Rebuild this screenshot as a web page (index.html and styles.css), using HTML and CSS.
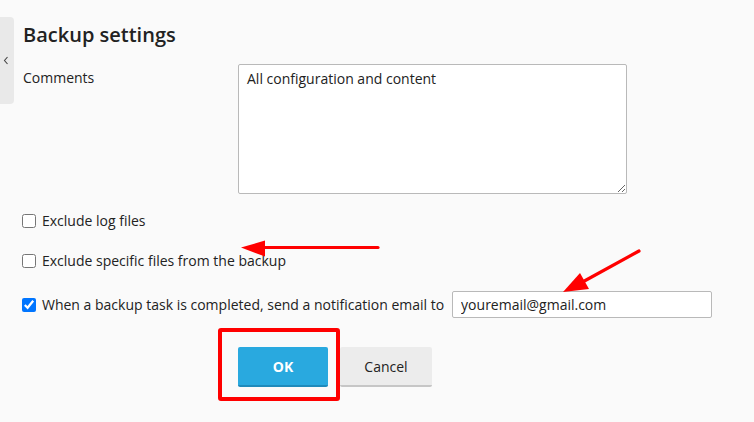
FILE: index.html
```html
<!DOCTYPE html>
<html lang="en">
<head>
<meta charset="utf-8">
<title>Backup settings</title>
<link rel="stylesheet" href="styles.css">
</head>
<body>
<div class="page">
  <div class="side-tab">
    <svg class="chevron" width="6" height="9" viewBox="0 0 6 9"><path d="M4.5 1 L1.5 4.5 L4.5 8" fill="none" stroke="#444" stroke-width="1.1"/></svg>
  </div>
  <main class="content">
    <h1 class="title">Backup settings</h1>
    <div class="field-row">
      <label class="field-label" for="comments">Comments</label>
      <textarea id="comments" class="comments">All configuration and content</textarea>
    </div>
    <div class="check-row first">
      <input type="checkbox" class="check" id="c1">
      <label for="c1">Exclude log files</label>
    </div>
    <div class="check-row">
      <input type="checkbox" class="check" id="c2">
      <label for="c2">Exclude specific files from the backup</label>
    </div>
    <div class="check-row notify">
      <input type="checkbox" class="check" id="c3" checked>
      <label for="c3">When a backup task is completed, send a notification email to</label>
      <input type="text" class="email" value="youremail@gmail.com">
    </div>
    <div class="buttons">
      <div class="ok-wrap">
        <span class="highlight"></span>
        <button class="btn ok">OK</button>
      </div>
      <button class="btn cancel">Cancel</button>
    </div>
  </main>
  <svg class="annotations" width="754" height="422" viewBox="0 0 754 422">
    <line x1="378" y1="247.5" x2="258" y2="247.5" stroke="#f00" stroke-width="3.2" stroke-linecap="round"/>
    <polygon points="241,247.5 265,240.5 265,256.5" fill="#f00"/>
    <line x1="639" y1="251" x2="578" y2="284.5" stroke="#f00" stroke-width="3.2" stroke-linecap="round"/>
    <polygon points="563,292 580,273 589,289" fill="#f00"/>
  </svg>
</div>
</body>
</html>
```

FILE: styles.css
```css
html, body {
  margin: 0;
  padding: 0;
  background: #fafafa;
}
body {
  font-family: "Open Sans", "Liberation Sans", sans-serif;
  font-size: 14px;
  line-height: 20px;
  color: #222;
}
.page {
  position: relative;
  width: 754px;
  height: 422px;
  overflow: hidden;
  display: flex;
  align-items: flex-start;
}
.side-tab {
  margin-top: 17px;
  width: 14px;
  height: 87px;
  flex: none;
  background: #e9e9e9;
  border-radius: 0 4px 4px 0;
  display: flex;
  align-items: center;
  justify-content: center;
}
.chevron {
  display: block;
  margin-left: -2px;
  margin-top: -1px;
}
.content {
  padding-left: 9px;
  flex: 1;
}
.title {
  margin: 21px 0 0;
  font-size: 20px;
  line-height: 28px;
  font-weight: 600;
  color: #222;
}
.field-row {
  display: flex;
  align-items: flex-start;
  margin-top: 15px;
}
.field-label {
  width: 215px;
  flex: none;
  padding-top: 4px;
}
.comments {
  box-sizing: border-box;
  width: 389px;
  height: 130px;
  margin: 0;
  padding: 4px 8px;
  border: 1px solid #b9b9b9;
  border-radius: 2px;
  background: #fff;
  font-family: inherit;
  font-size: 14px;
  line-height: 20px;
  color: #222;
  resize: both;
}
.check-row {
  display: flex;
  align-items: center;
  height: 20px;
  margin-top: 20px;
}
.check-row.first {
  margin-top: 17px;
}
.check-row.notify {
  height: 27px;
}
.check {
  width: 14px;
  height: 14px;
  margin: 0 6px 0 -1px;
  flex: none;
  accent-color: #0075ff;
}
.email {
  box-sizing: border-box;
  width: 260px;
  height: 27px;
  margin: 0 0 0 8px;
  padding: 0 8px;
  border: 1px solid #b9b9b9;
  border-radius: 2px;
  background: #fff;
  font-family: inherit;
  font-size: 14px;
  color: #222;
}
.buttons {
  display: flex;
  margin-top: 29px;
  padding-left: 215px;
}
.ok-wrap {
  position: relative;
}
.highlight {
  position: absolute;
  left: -20px;
  top: -19px;
  width: 122px;
  height: 73px;
  box-sizing: border-box;
  border: 4px solid #f00;
  border-radius: 3px;
}
.btn {
  box-sizing: border-box;
  height: 40px;
  border: none;
  border-radius: 2px;
  font-family: inherit;
  font-size: 14px;
  padding: 0;
}
.ok {
  width: 90px;
  background: #29a9df;
  border-bottom: 2px solid #1f8abb;
  color: #fff;
  font-weight: 700;
}
.cancel {
  width: 92px;
  margin-left: 12px;
  background: #ececec;
  border-bottom: 2px solid #c6c6c6;
  color: #222;
}
.annotations {
  position: absolute;
  left: 0;
  top: 0;
  pointer-events: none;
}
```
